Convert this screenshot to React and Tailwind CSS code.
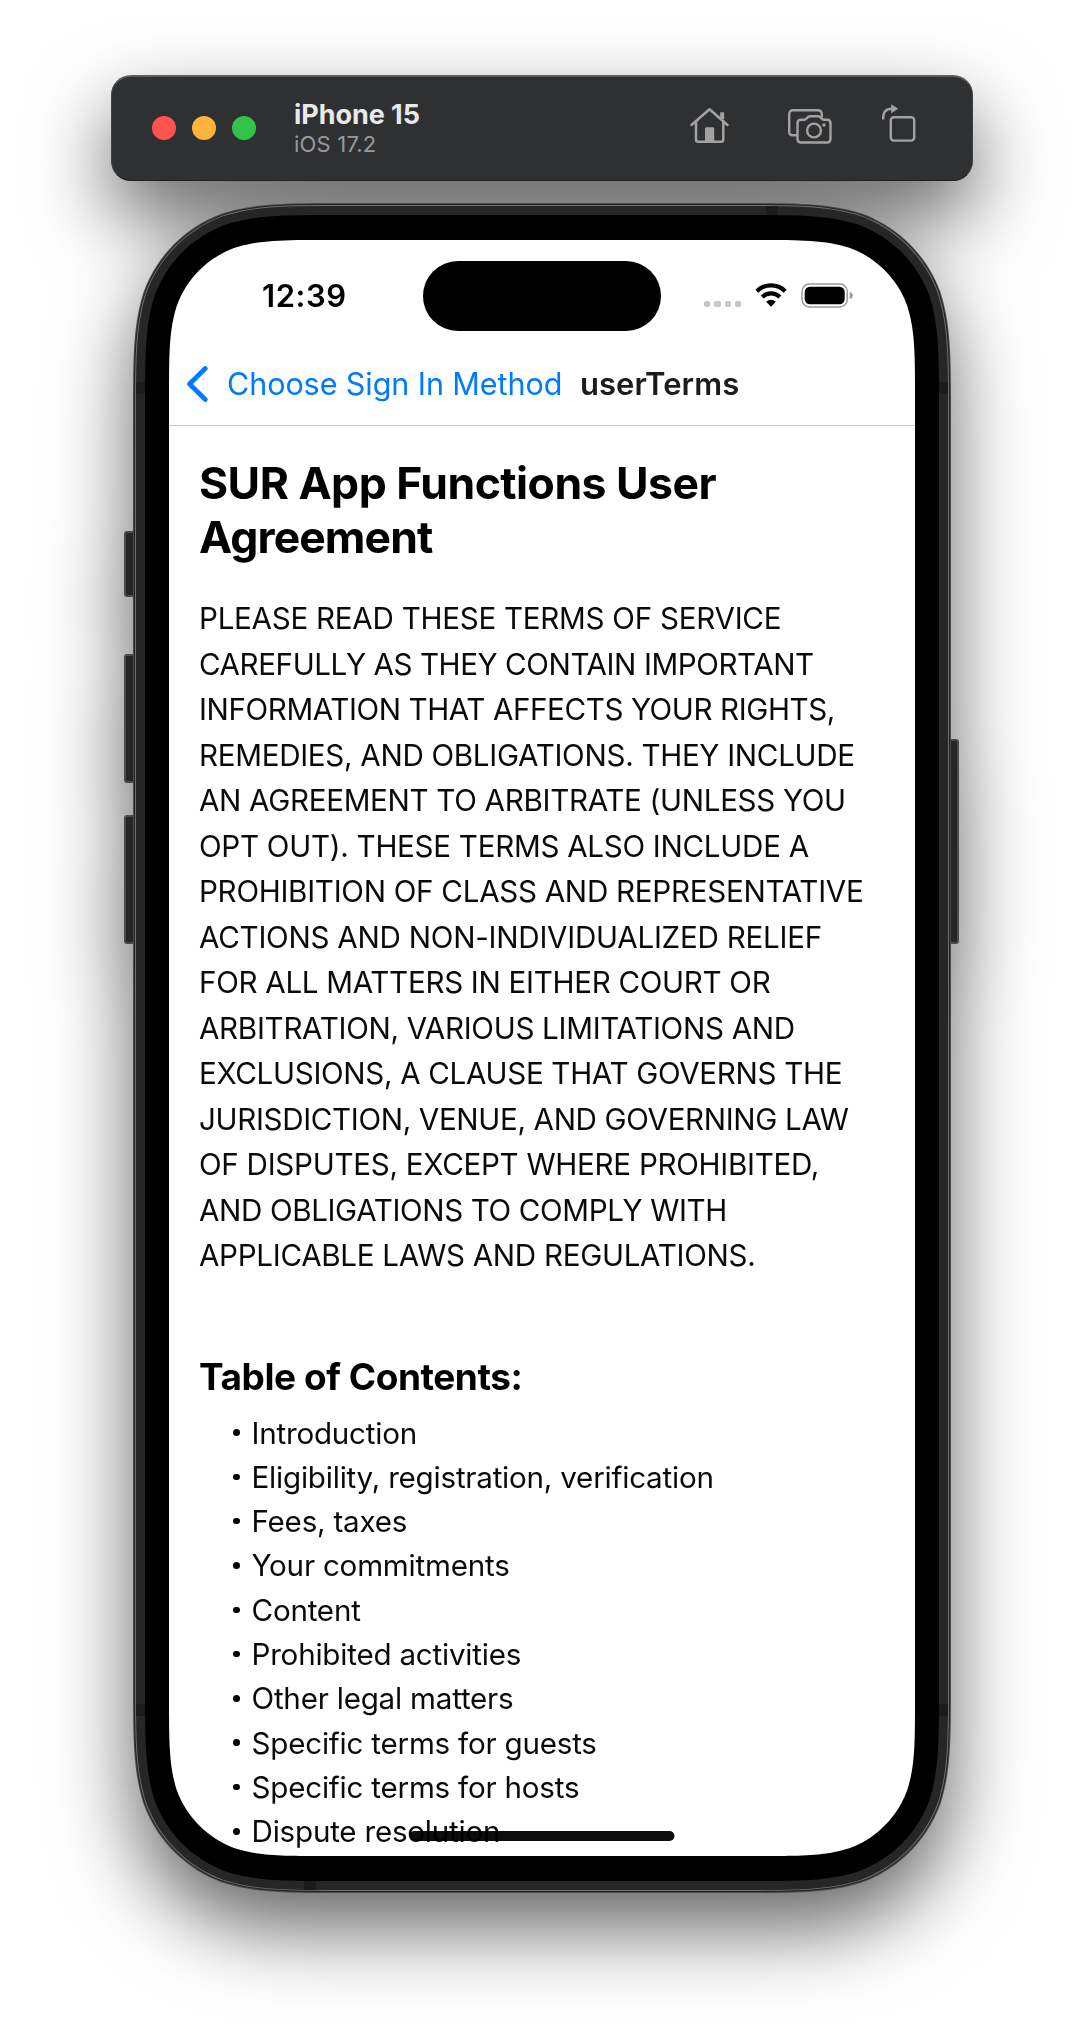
const C = [1.52866498, 1.08849296, 0.86840694, 0.63149379, 0.07491139, 0.37282383, 0.16905956];

// Rounded rectangle with continuous-curvature corners.
function smoothRect(w, h, r) {
  const [a, b, c, d, e, f, g] = C.map((k) => k * r);
  const W = (v) => w - v;
  const H = (v) => h - v;
  return (
    `M${a},0 L${W(a)},0 C${W(b)},0 ${W(c)},0 ${W(d)},${e} C${W(f)},${g} ${W(g)},${f} ${W(e)},${d} C${w},${c} ${w},${b} ${w},${a} ` +
    `L${w},${H(a)} C${w},${H(b)} ${w},${H(c)} ${W(e)},${H(d)} C${W(g)},${H(f)} ${W(f)},${H(g)} ${W(d)},${H(e)} C${W(c)},${h} ${W(b)},${h} ${W(a)},${h} ` +
    `L${a},${h} C${b},${h} ${c},${h} ${d},${H(e)} C${f},${H(g)} ${g},${H(f)} ${e},${H(d)} C0,${H(c)} 0,${H(b)} 0,${H(a)} ` +
    `L0,${a} C0,${b} 0,${c} ${e},${d} C${g},${f} ${f},${g} ${d},${e} C${c},0 ${b},0 ${a},0 Z`
  );
}

function Smooth({ w, h, r, className, children }) {
  return (
    <div className={className} style={{ width: w, height: h, clipPath: `path("${smoothRect(w, h, r)}")` }}>
      {children}
    </div>
  );
}

// Each line with its letter spacing in pixels.
const TERMS = [
  ['PLEASE READ THESE TERMS OF SERVICE', -0.27],
  ['CAREFULLY AS THEY CONTAIN IMPORTANT', -0.42],
  ['INFORMATION THAT AFFECTS YOUR RIGHTS,', -0.4],
  ['REMEDIES, AND OBLIGATIONS. THEY INCLUDE', -0.3],
  ['AN AGREEMENT TO ARBITRATE (UNLESS YOU', -0.31],
  ['OPT OUT). THESE TERMS ALSO INCLUDE A', -0.28],
  ['PROHIBITION OF CLASS AND REPRESENTATIVE', -0.28],
  ['ACTIONS AND NON-INDIVIDUALIZED RELIEF', -0.25],
  ['FOR ALL MATTERS IN EITHER COURT OR', -0.3],
  ['ARBITRATION, VARIOUS LIMITATIONS AND', -0.3],
  ['EXCLUSIONS, A CLAUSE THAT GOVERNS THE', -0.32],
  ['JURISDICTION, VENUE, AND GOVERNING LAW', -0.345],
  ['OF DISPUTES, EXCEPT WHERE PROHIBITED,', -0.28],
  ['AND OBLIGATIONS TO COMPLY WITH', -0.37],
  ['APPLICABLE LAWS AND REGULATIONS.', -0.3],
];

const CONTENTS = [
  'Introduction',
  'Eligibility, registration, verification',
  'Fees, taxes',
  'Your commitments',
  'Content',
  'Prohibited activities',
  'Other legal matters',
  'Specific terms for guests',
  'Specific terms for hosts',
  'Dispute resolution',
];

function HomeIcon() {
  return (
    <svg className="h-[38px] w-[42px]" viewBox="0 0 42 38" fill="none" stroke="#a2a2a3" strokeWidth="2.5" strokeLinecap="round" strokeLinejoin="round">
      <path d="M2.5 19 L20.5 3.2 L38.5 19" />
      <path d="M7 15.5 V33.5 Q7 35.8 9.3 35.8 H32 Q34.3 35.8 34.3 33.5 V15.5" />
      <path d="M33.2 13 V6.3" strokeWidth="4" strokeLinecap="butt" />
      <path d="M16 36 V22.5 Q16 21.2 17.2 21.2 H24 Q25.2 21.2 25.2 22.5 V36 Z" fill="#a2a2a3" stroke="none" />
    </svg>
  );
}

function ScreenshotIcon() {
  return (
    <svg className="h-[38px] w-[46px]" viewBox="0 0 46 38" fill="none" stroke="#a2a2a3" strokeWidth="2.4" strokeLinejoin="round">
      <path d="M10.5 29.3 H6 Q2.2 29.3 2.2 25.5 V8.3 Q2.2 4.3 6 4.3 H30.5 Q34.8 4.3 34.8 8.3 V11.5" />
      <path d="M14 13.8 H17 C20 13.8 20 10.2 23 10.2 H31 C34 10.2 34 13.8 37 13.8 H40 Q43.500 13.8 43.500 17.3 V33 Q43.500 36.500 40 36.500 H14 Q10.500 36.500 10.500 33 V17.300 Q10.500 13.800 14 13.800 Z" />
      <circle cx="27" cy="24.500" r="6.900" />
      <circle cx="37" cy="19" r="1.700" fill="#a2a2a3" stroke="none" />
    </svg>
  );
}

function RotateIcon() {
  return (
    <svg className="h-[40px] w-[36px]" viewBox="0 0 36 40" fill="none" stroke="#a2a2a3" strokeWidth="2.400">
      <rect x="9.800" y="14.200" width="23.400" height="23.400" rx="3" />
      <path d="M2.200 16.500 C1.700 9.500 4.500 5.800 11 5.800" />
      <path d="M10.200 1.300 L17.200 5.800 L10.200 10.300 Z" fill="#a2a2a3" stroke="none" />
    </svg>
  );
}

function WifiIcon() {
  return (
    <svg className="h-[24px] w-[32px]" viewBox="0 0 32 24" fill="none" stroke="#000" strokeWidth="4.200">
      <path d="M1.800 8.200 A20.300 20.300 0 0 1 30.200 8.200" />
      <path d="M7.200 14 A12.500 12.500 0 0 1 24.800 14" />
      <path d="M11.200 18.800 A6.800 6.800 0 0 1 20.800 18.800 L16 23.800 Z" fill="#000" stroke="none" />
    </svg>
  );
}

function BatteryIcon() {
  return (
    <svg className="h-[26px] w-[52px]" viewBox="0 0 52 26">
      <rect x="1" y="1" width="45.300" height="23" rx="7.500" fill="none" stroke="#9b9b9b" strokeWidth="1.500" />
      <rect x="3.700" y="3.700" width="40" height="17.600" rx="5.200" fill="#000" />
      <path d="M48.700 9 Q51.800 10 51.800 12.500 Q51.800 15 48.700 16 Z" fill="#9b9b9b" />
    </svg>
  );
}

function Toolbar() {
  return (
    <div className="flex h-[106px] w-[862px] items-center rounded-[20px] border border-t-2 border-[#3f4041] border-t-[#5b5c5d] border-b-[#1e1f20] bg-[#2f3032] pb-px pl-10">
      <div className="flex gap-4">
        <div className="size-6 rounded-full bg-[#ff5350]" />
        <div className="size-6 rounded-full bg-[#ffb23c]" />
        <div className="size-6 rounded-full bg-[#31c448]" />
      </div>
      <div className="ml-[38px] w-[395px] pt-0.5">
        <div className="text-[27px] leading-[30px] font-bold tracking-[-0.050px] text-[#e9e9ea]">iPhone 15</div>
        <div className="text-[22px] leading-[28px] tracking-[0.200px] text-[#98999a]">iOS 17.2</div>
      </div>
      <div className="flex items-center pb-[7px]">
        <HomeIcon />
        <div className="ml-[56px]"><ScreenshotIcon /></div>
        <div className="ml-[48px] -mt-[3px]"><RotateIcon /></div>
      </div>
    </div>
  );
}

function SideButton({ className }) {
  return <div className={`absolute w-[14px] rounded-[3px] border-2 border-[#4a4a4a] bg-[#262626] ${className}`} />;
}

function Screen() {
  return (
    <div className="relative flex h-full flex-col text-black">
      <div className="flex h-[117px] items-start">
        <div className="mt-[36px] ml-[93px] w-[161px] text-[31px] leading-[40px] font-semibold tracking-[0.550px]">12:39</div>
        <div className="mt-[21px] h-[70px] w-[238px] rounded-full bg-black" />
        <div className="mt-[43px] ml-[43px] flex items-start">
          <div className="mt-[18px] flex gap-[4px]">
            {[0, 1, 2, 3].map((i) => (
              <div key={i} className="size-[6.300px] rounded-[2px] bg-[#c6c6c6]" />
            ))}
          </div>
          <div className="ml-[14px]"><WifiIcon /></div>
          <div className="ml-[14px]"><BatteryIcon /></div>
        </div>
      </div>
      <div className="flex h-[69px] items-center border-b border-[#c6c6c8] pb-[14px] pl-[17px]">
        <svg className="h-[38px] w-[24px]" viewBox="0 0 24 38" fill="none" stroke="#007aff" strokeWidth="4.800" strokeLinecap="round" strokeLinejoin="round">
          <path d="M19.300 3.500 L3.500 19 L19.300 34.500" />
        </svg>
        <span className="ml-[17px] w-[353px] text-[30.500px] tracking-[-0.070px] whitespace-nowrap text-[#007aff]">Choose Sign In Method</span>
        <span className="text-[31px] font-semibold tracking-[0.050px] text-[#1c1c1e]">userTerms</span>
      </div>
      <div className="px-[30px] pt-[30px]">
        <h1 className="text-[44.500px] leading-[54px] font-bold">
          <span className="block tracking-[-0.520px] whitespace-nowrap">SUR App Functions User</span>
          <span className="block tracking-[-0.900px]">Agreement</span>
        </h1>
        <p className="mt-[32px] text-[29.600px] leading-[45.500px] text-[#0a0a0a]">
          {TERMS.map(([line, spacing]) => (
            <span key={line} className="block whitespace-nowrap" style={{ letterSpacing: spacing }}>{line}</span>
          ))}
        </p>
        <h2 className="mt-[75px] text-[37px] leading-[46px] font-bold tracking-[-0.450px]">Table of Contents:</h2>
        <ul className="mt-[11px] text-[29.600px] leading-[44.300px] tracking-[-0.220px] text-[#0a0a0a]">
          {CONTENTS.map((t) => (
            <li key={t} className="flex items-center pl-[34px] whitespace-nowrap">
              <span className="mr-[12px] size-[6.500px] rounded-full bg-black" />
              {t}
            </li>
          ))}
        </ul>
      </div>
      <div className="absolute bottom-[15px] left-1/2 h-[10px] w-[265px] -translate-x-1/2 rounded-full bg-black/95" />
    </div>
  );
}

export default function App() {
  return (
    <div className="flex h-[2044px] w-[1084px] flex-col items-center overflow-hidden bg-white pt-[75px] font-['Inter','Liberation_Sans',sans-serif]">
      <div className="flex flex-col items-center gap-[22px] drop-shadow-[0_36px_40px_rgba(0,0,0,0.600)]">
        <Toolbar />
        <div className="relative">
          <SideButton className="-left-[9px] top-[328px] h-[66px]" />
          <SideButton className="-left-[9px] top-[451px] h-[129px]" />
          <SideButton className="-left-[9px] top-[612px] h-[129px]" />
          <SideButton className="-right-[8px] top-[536px] h-[205px]" />
          <Smooth w={818} h={1690} r={141} className="bg-[#4a4a4a] p-px">
            <Smooth w={816} h={1688} r={140} className="bg-[#222222] p-px">
              <Smooth w={814} h={1686} r={139} className="bg-[#707070] p-px">
                <Smooth w={812} h={1684} r={138} className="relative bg-[#262626] p-[9px]">
                  <div className="absolute top-0 left-[630px] h-[9px] w-[12px] bg-[#1b1b1b]" />
                  <div className="absolute bottom-0 left-[168px] h-[9px] w-[12px] bg-[#1b1b1b]" />
                  <div className="absolute top-[176px] left-0 h-[12px] w-full bg-[#1b1b1b]" />
                  <div className="absolute bottom-[174px] left-0 h-[12px] w-full bg-[#1b1b1b]" />
                  <Smooth w={794} h={1666} r={128} className="relative bg-black px-[24px] pt-[25px]">
                    <Smooth w={746} h={1616} r={104} className="bg-white">
                      <Screen />
                    </Smooth>
                  </Smooth>
                </Smooth>
              </Smooth>
            </Smooth>
          </Smooth>
        </div>
      </div>
    </div>
  );
}
